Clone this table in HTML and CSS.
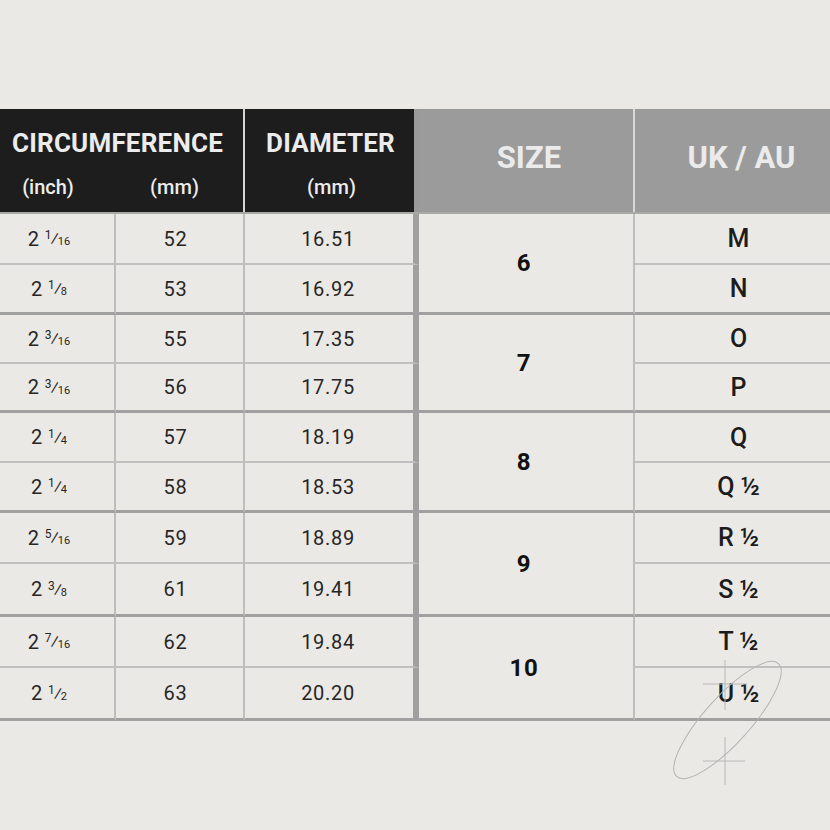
FILE: index.html
```html
<!DOCTYPE html>
<html>
<head>
<meta charset="utf-8">
<link rel="stylesheet" href="styles.css">
</head>
<body>
<div class="page">
  <div class="chart">
    <div class="head">
      <div class="h-dark h-circ">
        <div class="h-title">CIRCUMFERENCE</div>
        <div class="h-subs">
          <span class="sub-inch">(inch)</span>
          <span class="sub-mm">(mm)</span>
        </div>
      </div>
      <div class="h-dark h-diam">
        <div class="h-title">DIAMETER</div>
        <div class="h-subs single"><span>(mm)</span></div>
      </div>
      <div class="h-gray h-size">SIZE</div>
      <div class="h-gray h-uk">UK / AU</div>
    </div>

    <div class="body">
      <div class="c inch t">2<span class="fr"><span class="nu">1</span><span class="sl">⁄</span><span class="de">16</span></span></div>
      <div class="c mm t">52</div>
      <div class="c dia t">16.51</div>
      <div class="c size k">6</div>
      <div class="c uk t">M</div>

      <div class="c inch k">2<span class="fr"><span class="nu">1</span><span class="sl">⁄</span><span class="de">8</span></span></div>
      <div class="c mm k">53</div>
      <div class="c dia k">16.92</div>
      <div class="c uk k">N</div>

      <div class="c inch t">2<span class="fr"><span class="nu">3</span><span class="sl">⁄</span><span class="de">16</span></span></div>
      <div class="c mm t">55</div>
      <div class="c dia t">17.35</div>
      <div class="c size k">7</div>
      <div class="c uk t">O</div>

      <div class="c inch k">2<span class="fr"><span class="nu">3</span><span class="sl">⁄</span><span class="de">16</span></span></div>
      <div class="c mm k">56</div>
      <div class="c dia k">17.75</div>
      <div class="c uk k">P</div>

      <div class="c inch t">2<span class="fr"><span class="nu">1</span><span class="sl">⁄</span><span class="de">4</span></span></div>
      <div class="c mm t">57</div>
      <div class="c dia t">18.19</div>
      <div class="c size k">8</div>
      <div class="c uk t">Q</div>

      <div class="c inch k">2<span class="fr"><span class="nu">1</span><span class="sl">⁄</span><span class="de">4</span></span></div>
      <div class="c mm k">58</div>
      <div class="c dia k">18.53</div>
      <div class="c uk k">Q ½</div>

      <div class="c inch t">2<span class="fr"><span class="nu">5</span><span class="sl">⁄</span><span class="de">16</span></span></div>
      <div class="c mm t">59</div>
      <div class="c dia t">18.89</div>
      <div class="c size k">9</div>
      <div class="c uk t">R ½</div>

      <div class="c inch k">2<span class="fr"><span class="nu">3</span><span class="sl">⁄</span><span class="de">8</span></span></div>
      <div class="c mm k">61</div>
      <div class="c dia k">19.41</div>
      <div class="c uk k">S ½</div>

      <div class="c inch t">2<span class="fr"><span class="nu">7</span><span class="sl">⁄</span><span class="de">16</span></span></div>
      <div class="c mm t">62</div>
      <div class="c dia t">19.84</div>
      <div class="c size k">10</div>
      <div class="c uk t">T ½</div>

      <div class="c inch k">2<span class="fr"><span class="nu">1</span><span class="sl">⁄</span><span class="de">2</span></span></div>
      <div class="c mm k">63</div>
      <div class="c dia k">20.20</div>
      <div class="c uk k">U ½</div>
    </div>
  </div>

  <svg class="mark" width="160" height="160" viewBox="0 0 160 160">
    <ellipse cx="77.5" cy="70" rx="76" ry="23" transform="rotate(-48 77.5 70)" fill="none" stroke="#b4b4b4" stroke-width="1"/>
    <line x1="75" y1="10" x2="75" y2="60" stroke="#b8b8b8" stroke-width="1"/>
    <line x1="53" y1="34" x2="97" y2="34" stroke="#b8b8b8" stroke-width="1"/>
    <line x1="75" y1="87" x2="75" y2="135" stroke="#b8b8b8" stroke-width="1"/>
    <line x1="53" y1="111" x2="95" y2="111" stroke="#b8b8b8" stroke-width="1"/>
  </svg>
</div>
</body>
</html>
```

FILE: styles.css
```css
* {
  box-sizing: border-box;
}

html, body {
  margin: 0;
  padding: 0;
  background: #ebe9e5;
}

body {
  font-family: Roboto, "Liberation Sans", sans-serif;
  color: #222;
}

.page {
  position: relative;
  width: 830px;
  height: 830px;
  overflow: hidden;
  padding-top: 109px;
}

.chart {
  width: 830px;
}

/* ---------- header ---------- */
.head {
  display: grid;
  grid-template-columns: 245px 174px 216px 1fr;
  height: 105px;
  border-bottom: 2px solid #a8a8a8;
}

.h-dark {
  background: #1d1d1d;
  color: #ececec;
  padding-top: 19px;
}

.h-circ {
  border-right: 2px solid #d4d4d4;
}

.h-diam {
  border-right: 5px solid #9a9a9a;
}

.h-title {
  font-weight: 700;
  font-size: 26px;
  line-height: 30px;
  text-align: center;
  letter-spacing: 0.2px;
}

.h-circ .h-title {
  padding-right: 8px;
}

.h-diam .h-title {
  padding-left: 2px;
}

.h-subs {
  display: grid;
  grid-template-columns: 116px 1fr;
  margin-top: 17px;
  font-size: 20px;
  font-weight: 500;
  line-height: 24px;
}

.h-subs.single {
  grid-template-columns: 1fr;
  text-align: center;
  padding-left: 4px;
}

.sub-inch {
  text-align: center;
  padding-right: 20px;
}

.sub-mm {
  text-align: center;
  padding-right: 10px;
}

.h-gray {
  background: #9b9b9b;
  color: #ebebeb;
  font-weight: 700;
  font-size: 31px;
  display: flex;
  align-items: center;
  justify-content: center;
  padding-bottom: 6px;
}

.h-size {
  border-right: 2px solid #d8d8d8;
  padding-left: 6px;
}

.h-uk {
  padding-left: 18px;
}

/* ---------- body ---------- */
.body {
  display: grid;
  grid-template-columns: 116px 129px 174px 216px 1fr;
  grid-template-rows: 51px 50px 49px 49px 50px 50px 51px 53px 51px 53px;
}

.c {
  display: flex;
  align-items: center;
  justify-content: center;
  font-size: 20px;
  letter-spacing: 0.7px;
  color: #262626;
}

.c.t {
  border-bottom: 2px solid #c0c0c0;
}

.c.k {
  border-bottom: 3px solid #a0a0a0;
}

.inch {
  border-right: 2px solid #bdbdbd;
  padding-right: 16px;
}

.mm {
  border-right: 2px solid #bdbdbd;
  padding-right: 8px;
}

.dia {
  border-right: 6px solid #a0a0a0;
  padding-right: 2px;
}

.size {
  grid-row: span 2;
  border-right: 2px solid #bdbdbd;
  font-weight: 700;
  font-size: 24px;
  color: #111;
  padding-right: 4px;
}

.uk {
  font-size: 25px;
  font-weight: 500;
  letter-spacing: 0;
  color: #1c1c1c;
  padding-left: 12px;
}

/* fractions */
.fr {
  display: inline-flex;
  align-items: baseline;
  margin-left: 5px;
  font-size: 12px;
  letter-spacing: 0;
}

.nu {
  position: relative;
  top: -6px;
}

.sl {
  font-size: 18px;
  margin: 0 -1px;
}

.de {
  font-size: 11px;
}

/* watermark mark */
.mark {
  position: absolute;
  left: 650px;
  top: 650px;
}
```
